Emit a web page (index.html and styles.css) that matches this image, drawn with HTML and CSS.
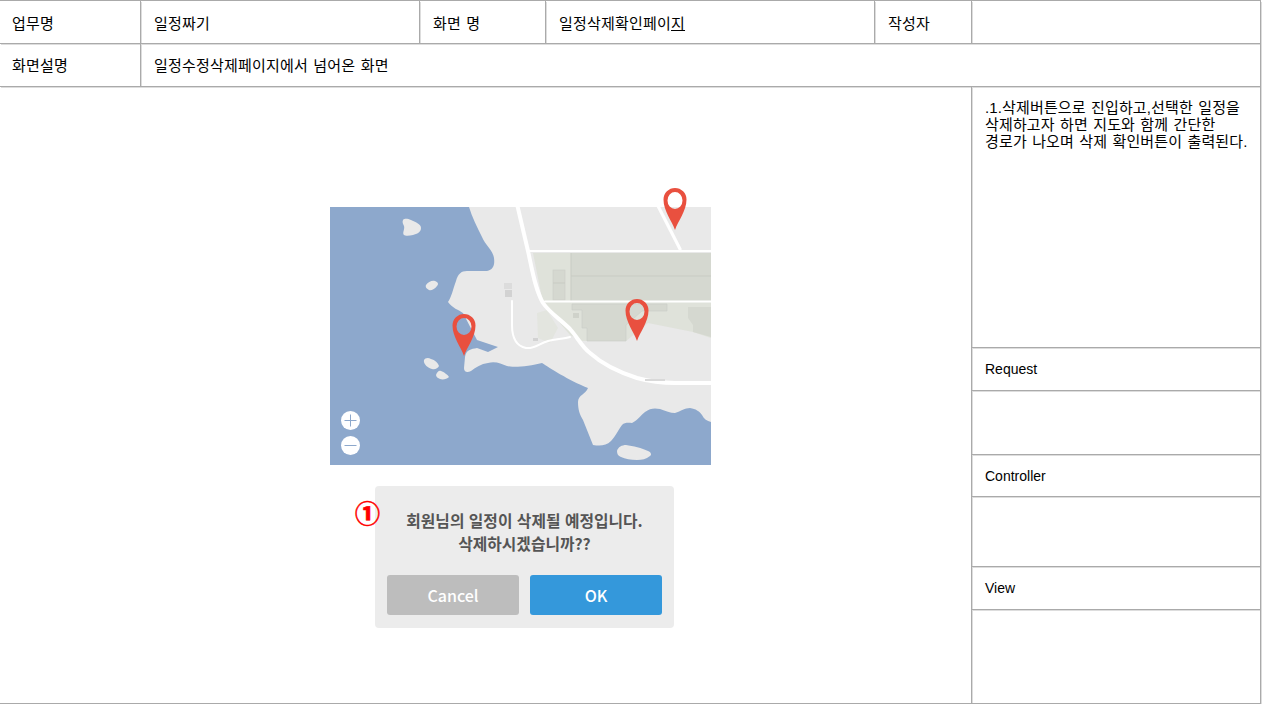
FILE: index.html
```html
<!DOCTYPE html>
<html lang="ko">
<head>
	<meta charset="UTF-8" />
	<meta name="viewport" content="width=device-width, initial-scale=1.0" />
	<title>일정삭제확인페이지</title>
	<link rel="stylesheet" href="styles.css">
</head>
<body>
    <table class="spec">
        <colgroup>
            <col class="col-a"><col class="col-b"><col class="col-c"><col class="col-d"><col class="col-e"><col class="col-f">
        </colgroup>
        <tr class="row-head">
            <td>업무명</td>
            <td>일정짜기</td>
            <td>화면 명</td>
            <td>일정삭제확인페이<u>지</u></td>
            <td>작성자</td>
            <td></td>
        </tr>
        <tr class="row-head row-desc">
            <td>화면설명</td>
            <td colspan="5">일정수정삭제페이지에서 넘어온 화면</td>
        </tr>
        <tr class="row-note">
            <td colspan="5" rowspan="7" class="screen">
                <svg class="map" width="381" height="258" viewBox="0 0 381 258">
                    <defs>
                        <path id="pin" fill-rule="evenodd" d="M0 42C-3 33-11.5 23-11.5 11.5A11.5 11.5 0 0 1 11.5 11.5C11.5 23 3 33 0 42ZM-7.5 12.5a7.5 8.5 0 1 0 15 0a7.5 8.5 0 1 0-15 0Z" />
                        <clipPath id="mapclip"><rect width="381" height="258" /></clipPath>
                        <filter id="soft" x="-30" y="-30" width="450" height="320" filterUnits="userSpaceOnUse">
                            <feGaussianBlur stdDeviation="0.4" />
                        </filter>
                    </defs>
                    <g clip-path="url(#mapclip)">
                        <g filter="url(#soft)">
                            <rect x="-5" y="-5" width="391" height="268" fill="#e9e9e9" />

                            <!-- farm blocks -->
                            <path fill="#dfe2da" d="M203 46H381V131L363 125L318 116L296 134H252L240 128L213 96Z" />
                            <rect x="241" y="46" width="140" height="49" fill="#d5d8d0" />
                            <rect x="223" y="63" width="12" height="30" fill="#d5d8d0" stroke="#cbcec6" stroke-width=".6" />
                            <path d="M241 69H381M223 76H235M241 46V95" stroke="#c8cbc3" fill="none" />
                            <path fill="#d5d8d0" stroke="#cbcec6" stroke-width=".6" d="M242 97V103H252V121H257V134H296V118L312 104H337V97Z" />
                            <path fill="#d5d8d0" d="M358 100H381V130L363 125V118L358 111Z" />
                            <path fill="#e3e5df" d="M207 106L217 103L228 121L220 136L208 131Z" />
                            <rect x="243" y="106" width="6" height="5" fill="#cfd2ca" />
                            <rect x="174" y="76" width="8" height="6" fill="#dcdcdc" />
                            <rect x="175" y="83" width="7" height="7" fill="#d2d2d2" />
                            <rect x="203" y="131" width="5" height="3" fill="#d2d2d2" />

                            <!-- water and islands -->
                            <path fill="#8da8cc" d="M0 0H139C142 10 147 20 152 30C155 38 163 43 164 51C165 58 163 63 157 64L137 64C131 64 128 67 126 74C123 82 122 89 118 95C122 101 129 103 133 106L147 133L168 140L158 145L147 141C141 142 136 143 135 150L134 161C134 165 137 166 141 164C146 160 151 157 158 156C166 154 171 157 177 159C184 161 200 159 212 156C220 161 238 173 258 181C256 187 248 188 248 195C248 203 250 208 253 213L263 238C270 239 276 239 281 234C286 229 288 223 292 218C295 215 299 216 302 216C308 213 311 208 315 205C320 201 325 201 330 202C336 204 340 206 345 206C351 204 355 201 360 201C366 202 369 204 372 208C374 212 377 214 381 215V258H0Z" />
                            <g fill="#e9e9e9">
                                <path d="M73 13C75 11 78 12 81 13C85 15 91 17 91 21C91 25 87 27 83 28C79 29 75 29 74 28C72 26 75 22 74 19C73 17 72 15 73 13Z" />
                                <path d="M96 78C98 75 102 73 105 74C108 75 109 77 107 79C105 82 101 84 99 83C97 82 95 80 96 78Z" />
                                <path d="M94 153C95 151 98 150 101 152C105 153 108 156 109 159C108 161 105 163 102 162C98 161 93 157 94 153Z" />
                                <path d="M106 168C107 165 109 163 111 164C114 165 118 168 119 170C117 172 113 173 110 172C108 171 106 170 106 168Z" />
                                <path d="M287 244C288 240 292 238 296 238C303 239 312 241 318 244C321 245 322 248 320 249C316 252 312 253 307 253C301 253 295 252 291 250C288 249 287 247 287 244Z" />
                            </g>

                            <!-- roads -->
                            <g fill="none" stroke="#fff" stroke-linejoin="round" stroke-linecap="round">
                                <path stroke-width="2.2" d="M200 44H381M215 94.500H381" />
                                <path stroke-width="4" d="M187 -3L198 44C202 62 205 82 213 96C219 105 231 113 240 122C248 131 252 140 260 146C270 155 285 164 307 171C318 174 330 176 345 176H381" />
                                <path stroke-width="3.2" d="M327 -3L350 42" />
                                <path stroke-width="2" d="M182 94V118C182 130 186 139 196 141C205 142 208 137 218 134C226 132 234 132 240 130" />
                            </g>
                            <rect x="315" y="172" width="20" height="2" fill="#d9d9d9" />

                            <!-- zoom buttons -->
                            <circle cx="20.500" cy="213.500" r="9.500" fill="#fff" />
                            <circle cx="20.500" cy="238.500" r="9.500" fill="#fff" />
                            <path d="M14.500 213.500H26.500M20.500 207.500V219.500M14.500 238.500H26.500" stroke="#8da8cc" fill="none" />
                        </g>
                    </g>

                    <!-- pins -->
                    <g fill="#e9503f">
                        <use href="#pin" x="345" y="-19" />
                        <use href="#pin" x="307" y="92" />
                        <use href="#pin" x="134" y="107" />
                    </g>
                </svg>
                <div class="dialog">
                    <span class="mark">①</span>
                    <p class="dialog-text">회원님의 일정이 삭제될 예정입니다.<br>삭제하시겠습니까??</p>
                    <div class="dialog-btns">
                        <button class="btn btn-cancel">Cancel</button>
                        <button class="btn btn-ok">OK</button>
                    </div>
                </div>
            </td>
            <td class="note">.1.삭제버튼으로 진입하고,선택한 일정을<br>삭제하고자 하면 지도와 함께 간단한<br>경로가 나오며 삭제 확인버튼이 출력된다.</td>
        </tr>
        <tr class="row-head"><td class="label">Request</td></tr>
        <tr class="row-a"><td></td></tr>
        <tr class="row-ctrl"><td class="label">Controller</td></tr>
        <tr class="row-b"><td></td></tr>
        <tr class="row-head"><td class="label">View</td></tr>
        <tr class="row-c"><td></td></tr>
    </table>
</body>
</html>
```

FILE: styles.css
```css
body {
    margin: 0;
    background-color: #fff;
    font-family: "Liberation Sans", "Noto Sans CJK KR", sans-serif;
    font-size: 15px;
    color: #000;
}

.spec {
    width: 1261px;
    table-layout: fixed;
    border-collapse: separate;
    border-spacing: 0;
    border-top: 1px solid #aaa;
}

.col-a { width: 141px; }
.col-b { width: 279px; }
.col-c { width: 126px; }
.col-d { width: 329px; }
.col-e { width: 97px; }
.col-f { width: 289px; }

.spec td {
    box-sizing: border-box;
    border-right: 1px solid #aaa;
    border-bottom: 1px solid #aaa;
    box-shadow: 1px 1px 0 #ddd;
    padding: 0 0 0 13px;
    letter-spacing: 0.2px;
    word-spacing: 1px;
    vertical-align: middle;
}

.spec tr:first-child td:first-child,
.spec tr:nth-child(2) td:first-child {
    padding-left: 12px;
}

.row-head { height: 43px; }
.row-desc td { padding-bottom: 2px; }
.row-note { height: 261px; }
.row-a { height: 64px; }
.row-ctrl { height: 42px; }
.row-ctrl td { padding-top: 1px; }
.row-b { height: 70px; }
.row-c { height: 94px; }

.spec .label {
    font-size: 14px;
    letter-spacing: 0;
}

.spec .note {
    vertical-align: top;
    padding-top: 12px;
    line-height: 17px;
    letter-spacing: 0.14px;
}

.spec .screen {
    padding: 120px 0 0;
    vertical-align: top;
}

.map {
    display: block;
    margin-left: 330px;
    overflow: visible;
}

.dialog {
    position: relative;
    box-sizing: border-box;
    width: 299px;
    height: 142px;
    margin: 21px 0 0 375px;
    padding: 23px 12px 0;
    background-color: #ececec;
    border-radius: 4px;
    font-family: "Noto Sans CJK KR", sans-serif;
    letter-spacing: 0;
    word-spacing: 0;
}

.mark {
    position: absolute;
    left: -20px;
    top: 8px;
    font-size: 25px;
    line-height: 36px;
    font-weight: 900;
    -webkit-text-stroke: 0.5px #f00;
    color: #f00;
}

.dialog-text {
    margin: 0;
    text-align: center;
    font-size: 15.8px;
    font-weight: 700;
    line-height: 23px;
    color: #555;
}

.dialog-btns {
    display: flex;
    justify-content: space-between;
    margin-top: 20px;
}

.btn {
    width: 132px;
    height: 40px;
    border: none;
    border-radius: 3px;
    color: #fff;
    font-family: "Noto Sans CJK KR", sans-serif;
    font-size: 16px;
    font-weight: 500;
}

.btn-cancel { background-color: #bdbdbd; }
.btn-ok { background-color: #3498db; }
```
